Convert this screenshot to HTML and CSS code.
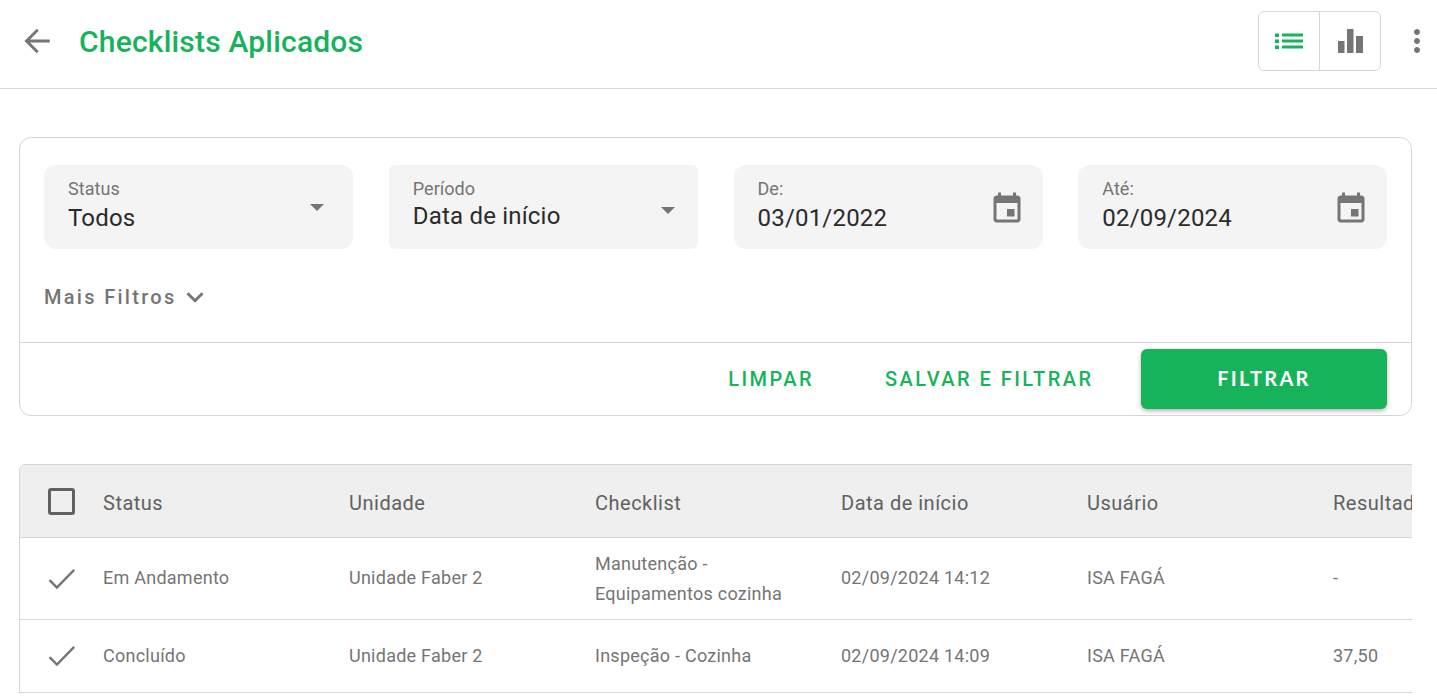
FILE: index.html
```html
<!DOCTYPE html>
<html lang="pt-BR">
<head>
  <meta charset="UTF-8">
  <title>Checklists Aplicados</title>
  <link rel="stylesheet" href="styles.css">
</head>
<body>

  <!-- Topo -->
  <header class="topo">
    <svg class="voltar" viewBox="0 0 24 24" width="36" height="36"><path d="M20.500 12H5.500M12.500 4.500 5 12l7.500 7.500" fill="none" stroke-width="1.900"/></svg>
    <h1 class="titulo">Checklists Aplicados</h1>
    <div class="alternar">
      <div class="alternar-item">
        <svg class="icone-verde" viewBox="0 0 28 16" width="28" height="16"><path d="M0 .5h4v3.500H0zM0 6.500h4V10H0zM0 12.500h4V16H0zM7 .5h21v3H7zM7 6.500h21v3H7zM7 12.500h21v3H7z"/></svg>
      </div>
      <div class="alternar-item">
        <svg class="icone-cinza" viewBox="0 0 25 24" width="25" height="24"><path d="M0 12h6.500v12H0zM9 0h6.500v24H9zM18 7h7v17h-7z"/></svg>
      </div>
    </div>
    <svg class="mais" viewBox="0 0 24 24" width="36" height="36"><path d="M12 8c1.100 0 2-.9 2-2s-.9-2-2-2-2 .9-2 2 .9 2 2 2zm0 2c-1.100 0-2 .9-2 2s.9 2 2 2 2-.9 2-2-.9-2-2-2zm0 6c-1.100 0-2 .9-2 2s.9 2 2 2 2-.9 2-2-.9-2-2-2z"/></svg>
  </header>

  <main class="conteudo">

    <!-- Filtros -->
    <section class="filtros">
      <div class="filtros-corpo">
        <div class="campos">
          <div class="campo">
            <div class="campo-texto">
              <span class="campo-rotulo">Status</span>
              <span class="campo-valor">Todos</span>
            </div>
            <span class="seta"></span>
          </div>
          <div class="campo campo-periodo">
            <div class="campo-texto">
              <span class="campo-rotulo">Período</span>
              <span class="campo-valor">Data de início</span>
            </div>
            <span class="seta"></span>
          </div>
          <div class="campo">
            <div class="campo-texto">
              <span class="campo-rotulo">De:</span>
              <span class="campo-valor">03/01/2022</span>
            </div>
            <svg class="calendario" viewBox="0 0 24 24" width="36" height="36"><path d="M17 12h-5v5h5v-5zM16 1v2H8V1H6v2H5c-1.110 0-1.990.9-1.990 2L3 19c0 1.100.89 2 2 2h14c1.100 0 2-.9 2-2V5c0-1.100-.9-2-2-2h-1V1h-2zm3 18H5V8h14v11z"/></svg>
          </div>
          <div class="campo">
            <div class="campo-texto">
              <span class="campo-rotulo">Até:</span>
              <span class="campo-valor">02/09/2024</span>
            </div>
            <svg class="calendario" viewBox="0 0 24 24" width="36" height="36"><path d="M17 12h-5v5h5v-5zM16 1v2H8V1H6v2H5c-1.110 0-1.990.9-1.990 2L3 19c0 1.100.89 2 2 2h14c1.100 0 2-.9 2-2V5c0-1.100-.9-2-2-2h-1V1h-2zm3 18H5V8h14v11z"/></svg>
          </div>
        </div>
        <div class="mais-filtros">
          <span>Mais Filtros</span>
          <svg viewBox="0 0 24 24" width="34" height="34"><path d="M7.410 8.590 12 13.170l4.590-4.580L18 10l-6 6-6-6 1.410-1.410z"/></svg>
        </div>
      </div>
      <div class="filtros-acoes">
        <button class="botao-texto botao-limpar">LIMPAR</button>
        <button class="botao-texto botao-salvar">SALVAR E FILTRAR</button>
        <button class="botao-filtrar">FILTRAR</button>
      </div>
    </section>

    <!-- Tabela -->
    <section class="tabela">
      <div class="linha cabecalho">
        <div class="celula-check"><span class="caixa"></span></div>
        <div>Status</div>
        <div>Unidade</div>
        <div>Checklist</div>
        <div>Data de início</div>
        <div>Usuário</div>
        <div>Resultado</div>
      </div>
      <div class="linha linha-alta">
        <div class="celula-check">
          <svg viewBox="0 0 24 24" width="34" height="34"><path d="M3.200 12.800 8.400 18 20.600 5.600" fill="none" stroke-width="1.700"/></svg>
        </div>
        <div>Em Andamento</div>
        <div>Unidade Faber 2</div>
        <div class="celula-dupla">Manutenção - Equipamentos cozinha</div>
        <div>02/09/2024 14:12</div>
        <div>ISA FAGÁ</div>
        <div>-</div>
      </div>
      <div class="linha">
        <div class="celula-check">
          <svg viewBox="0 0 24 24" width="34" height="34"><path d="M3.200 12.800 8.400 18 20.600 5.600" fill="none" stroke-width="1.700"/></svg>
        </div>
        <div>Concluído</div>
        <div>Unidade Faber 2</div>
        <div>Inspeção - Cozinha</div>
        <div>02/09/2024 14:09</div>
        <div>ISA FAGÁ</div>
        <div>37,50</div>
      </div>
    </section>

  </main>
</body>
</html>
```

FILE: styles.css
```css
* {
  box-sizing: border-box;
}

html, body {
  height: 100%;
}

body {
  margin: 0;
  overflow: hidden;
  background: #fff;
  color: #757575;
  font-family: Roboto, sans-serif;
}

/* Topo */
.topo {
  display: flex;
  align-items: center;
  height: 89px;
  padding: 0 2px 6px 19px;
  border-bottom: 1px solid #d6d6d6;
}

.voltar {
  stroke: #757575;
  flex: none;
}

.titulo {
  margin: 0 0 0 24px;
  flex: 1;
  color: #16b35b;
  font-size: 30px;
  font-weight: 500;
  letter-spacing: 0.2px;
}

.alternar {
  display: flex;
  width: 123px;
  height: 60px;
  border: 1px solid #d6d6d6;
  border-radius: 6px;
}

.alternar-item {
  flex: 1;
  display: flex;
  align-items: center;
  justify-content: center;
}

.alternar-item + .alternar-item {
  border-left: 1px solid #d6d6d6;
}

.icone-verde {
  fill: #16b35b;
}

.icone-cinza {
  fill: #757575;
}

.mais {
  margin-left: 18px;
  fill: #757575;
}

/* Filtros */
.conteudo {
  padding: 48px 25px 0 19px;
}

.filtros {
  height: 279px;
  border: 1px solid #d6d6d6;
  border-radius: 12px;
}

.filtros-corpo {
  height: 205px;
  padding: 27px 24px 0;
  border-bottom: 1px solid #d6d6d6;
}

.campos {
  display: grid;
  grid-template-columns: repeat(4, 309px);
  column-gap: 35.750px;
}

.campo {
  display: flex;
  align-items: center;
  justify-content: space-between;
  height: 84px;
  padding: 0 18px 0 24px;
  background: #f4f4f4;
  border-radius: 12px;
}

.campo-periodo {
  border-radius: 6px;
}

.campo-texto {
  display: flex;
  flex-direction: column;
  margin-bottom: 3px;
}

.campo-rotulo {
  font-size: 18px;
  line-height: 20px;
  letter-spacing: 0.05px;
}

.campo-valor {
  margin-top: 4px;
  color: #2b2b2b;
  font-size: 24px;
  line-height: 30px;
  letter-spacing: 0.2px;
}

.campo-periodo .campo-texto {
  margin-bottom: 5px;
}

.campo-periodo .campo-valor {
  margin-top: 2px;
}

.seta {
  width: 0;
  height: 0;
  margin: 1px 11px 0 0;
  border-left: 7px solid transparent;
  border-right: 7px solid transparent;
  border-top: 7px solid #757575;
}

.campo-periodo .seta {
  margin: 7px 5px 0 0;
}

.calendario {
  fill: #757575;
  margin-top: 3px;
}

.mais-filtros {
  display: flex;
  align-items: center;
  gap: 1px;
  margin-top: 31px;
  font-size: 20px;
  font-weight: 500;
  letter-spacing: 2.300px;
}

.mais-filtros svg {
  fill: #757575;
}

.filtros-acoes {
  display: flex;
  align-items: center;
  justify-content: flex-end;
  height: 72px;
  padding: 0 24px 0 0;
}

.botao-texto {
  padding: 0;
  border: none;
  background: none;
  color: #16b35b;
  font-family: Roboto, sans-serif;
  font-size: 20px;
  font-weight: 500;
  letter-spacing: 2.450px;
}

.botao-limpar {
  margin-right: 71px;
}

.botao-salvar {
  margin-right: 47.500px;
}

.botao-filtrar {
  width: 246px;
  height: 60px;
  padding: 0 0 2px;
  border: none;
  border-radius: 6px;
  background: #16b35b;
  color: #fff;
  font-family: Lato, sans-serif;
  font-size: 20px;
  font-weight: 700;
  letter-spacing: 2.300px;
  box-shadow: 0 2px 4px rgba(0, 0, 0, 0.3);
}

/* Tabela */
.tabela {
  margin-top: 48px;
  overflow: hidden;
  border-left: 1px solid #d6d6d6;
  border-radius: 6px 0 0 0;
  width: 1393px;
}

.linha {
  display: grid;
  grid-template-columns: 83px repeat(6, 246px);
  align-items: center;
  height: 73px;
  padding-bottom: 2px;
  border-bottom: 1px solid #d6d6d6;
  font-size: 18px;
  letter-spacing: 0.25px;
  white-space: nowrap;
}

.linha-alta {
  height: 82px;
}

.cabecalho {
  height: 74px;
  padding-bottom: 0;
  border-top: 1px solid #d6d6d6;
  background: #efefef;
  color: #616161;
  font-size: 20px;
  letter-spacing: 0.5px;
}

.cabecalho > div {
  margin-top: 4px;
}

.cabecalho .celula-check {
  margin-top: 0;
}

.celula-check {
  display: flex;
  align-items: center;
  padding-left: 25px;
}

.celula-check svg {
  margin-top: 2px;
  stroke: #757575;
}

.caixa {
  width: 27px;
  height: 27px;
  margin-left: 3px;
  border: 3px solid #616161;
  border-radius: 3px;
}

.celula-dupla {
  width: 215px;
  margin-top: 2px;
  white-space: normal;
  line-height: 30px;
}
```
